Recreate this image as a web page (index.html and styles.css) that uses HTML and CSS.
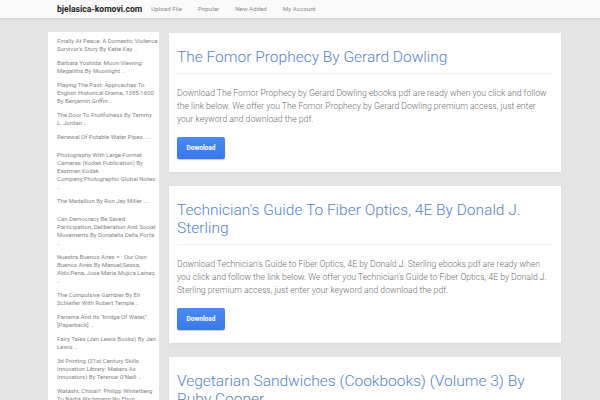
FILE: index.html
```html
<!DOCTYPE html>
<html>
<head>
<meta charset="utf-8">
<link rel="stylesheet" href="styles.css">
</head>
<body>
<header class="topbar">
  <div class="topbar-inner">
    <a class="logo" href="#">bjelasica-komovi.com</a>
    <nav class="nav">
      <a href="#">Upload File</a>
      <a href="#">Popular</a>
      <a href="#">New Added</a>
      <a href="#">My Account</a>
    </nav>
  </div>
</header>
<div class="page">
  <aside class="sidebar">
    <ul class="side-list">
      <li><a href="#">Finally At Peace: A Domestic Violence Survivor's Story By Katie Kay ..</a></li>
      <li><a href="#">Barbara Yoshida: Moon Viewing: Megaliths By Moonlight ..</a></li>
      <li><a href="#">Playing The Past: Approaches To English Historical Drama, 1385-1600 By Benjamin Griffin ..</a></li>
      <li><a href="#">The Door To Fruitfulness By Tammy L. Jordan ..</a></li>
      <li class="tall"><a href="#">Renewal Of Potable Water Pipes ....</a></li>
      <li><a href="#">Photography With Large-Format Cameras (Kodak Publication) By Eastman Kodak Company;Photographic Global Notes ..</a></li>
      <li class="tall"><a href="#">The Medallion By Ron Jay Miller ....</a></li>
      <li><a href="#">Can Democracy Be Saved: Participation, Deliberation And Social Movements By Donatella Della Porta ..</a></li>
      <li><a href="#">Nuestra Buenos Aires = : Our Own Buenos Aires By Manuel;Sessa, Aldo;Pena, Jose Maria Mujica Lainez ..</a></li>
      <li><a href="#">The Compulsive Gambler By Eli Schleifer With Robert Temple ..</a></li>
      <li><a href="#">Panama And Its "bridge Of Water," [Paperback] ..</a></li>
      <li><a href="#">Fairy Tales (Jan Lewis Books) By Jan Lewis ..</a></li>
      <li><a href="#">3d Printing (21st Century Skills Innovation Library: Makers As Innovators) By Terence O'Neill ..</a></li>
      <li><a href="#">Watashi, Chisai?: Philipp Winterberg To Nadia Wichmann No Ehon ..</a></li>
    </ul>
  </aside>
  <main class="main">
    <article class="card">
      <h2 class="card-title"><a href="#">The Fomor Prophecy By Gerard Dowling</a></h2>
      <p class="card-text">Download The Fomor Prophecy by Gerard Dowling ebooks pdf are ready when you click and follow the link below. We offer you The Fomor Prophecy by Gerard Dowling premium access, just enter your keyword and download the pdf.</p>
      <a class="btn" href="#">Download</a>
    </article>
    <article class="card">
      <h2 class="card-title"><a href="#">Technician's Guide To Fiber Optics, 4E By Donald J. Sterling</a></h2>
      <p class="card-text">Download Technician's Guide to Fiber Optics, 4E by Donald J. Sterling ebooks pdf are ready when you click and follow the link below. We offer you Technician's Guide to Fiber Optics, 4E by Donald J. Sterling premium access, just enter your keyword and download the pdf.</p>
      <a class="btn" href="#">Download</a>
    </article>
    <article class="card">
      <h2 class="card-title"><a href="#">Vegetarian Sandwiches (Cookbooks) (Volume 3) By Ruby Cooper</a></h2>
      <p class="card-text">Download Vegetarian Sandwiches (Cookbooks) (Volume 3) by Ruby Cooper ebooks pdf are ready when you click and follow the link below.</p>
      <a class="btn" href="#">Download</a>
    </article>
  </main>
</div>
</body>
</html>
```
FILE: styles.css
```css
* { box-sizing: border-box; }
html, body { margin: 0; padding: 0; }
body {
  background: #e4e4e4;
  font-family: Roboto, "Liberation Sans", sans-serif;
  overflow: hidden;
}
a { text-decoration: none; }

.topbar {
  height: 19px;
  background: #fafafa;
  border-bottom: 1px solid #d6d6d6;
  box-shadow: 0 1px 2px rgba(0,0,0,0.06);
}
.topbar-inner {
  display: flex;
  align-items: center;
  height: 18px;
  padding-left: 57px;
}
.logo {
  font-weight: 700;
  font-size: 8.6px;
  color: #1e1e1e;
  margin-right: 1px;
}
.nav { display: flex; }
.nav a {
  font-size: 6.2px;
  color: #8a8a8a;
  padding: 0 8px;
}

.page {
  display: flex;
  align-items: flex-start;
  gap: 10px;
  padding-left: 48px;
  margin-top: 13px;
}
.sidebar {
  width: 111px;
  background: #fff;
  padding: 5px 1px 40px 9px;
  flex: none;
}
.side-list { list-style: none; margin: 0; padding: 0; }
.side-list li {
  font-size: 6px;
  line-height: 8px;
  margin-bottom: 6px;
}
.side-list li.tall { margin-bottom: 10px; }
.side-list a { color: #858585; }

.main {
  width: 392px;
  flex: none;
  margin-top: 1px;
}
.card {
  background: #fff;
  padding: 15px 8px 13px;
  margin-bottom: 14px;
  box-shadow: 0 1px 2px rgba(0,0,0,0.06);
}
.card-title {
  margin: 0 0 8px;
  font-size: 15.5px;
  line-height: 18px;
  font-weight: 300;
  padding-bottom: 7px;
  border-bottom: 1px solid #f0f0f0;
}
.card-title a { color: #5583c9; }
.card-text {
  margin: 13px 0 9px;
  font-size: 8.65px;
  line-height: 13px;
  font-weight: 300;
  color: #6e6e6e;
}
.btn {
  display: inline-block;
  width: 48px;
  height: 22px;
  line-height: 22px;
  text-align: center;
  font-size: 6.5px;
  font-weight: 700;
  color: #fff;
  border-radius: 2px;
  background: linear-gradient(#4a8af4, #3a78e8);
  box-shadow: 0 1px 1px rgba(0,0,0,0.2);
}
```
